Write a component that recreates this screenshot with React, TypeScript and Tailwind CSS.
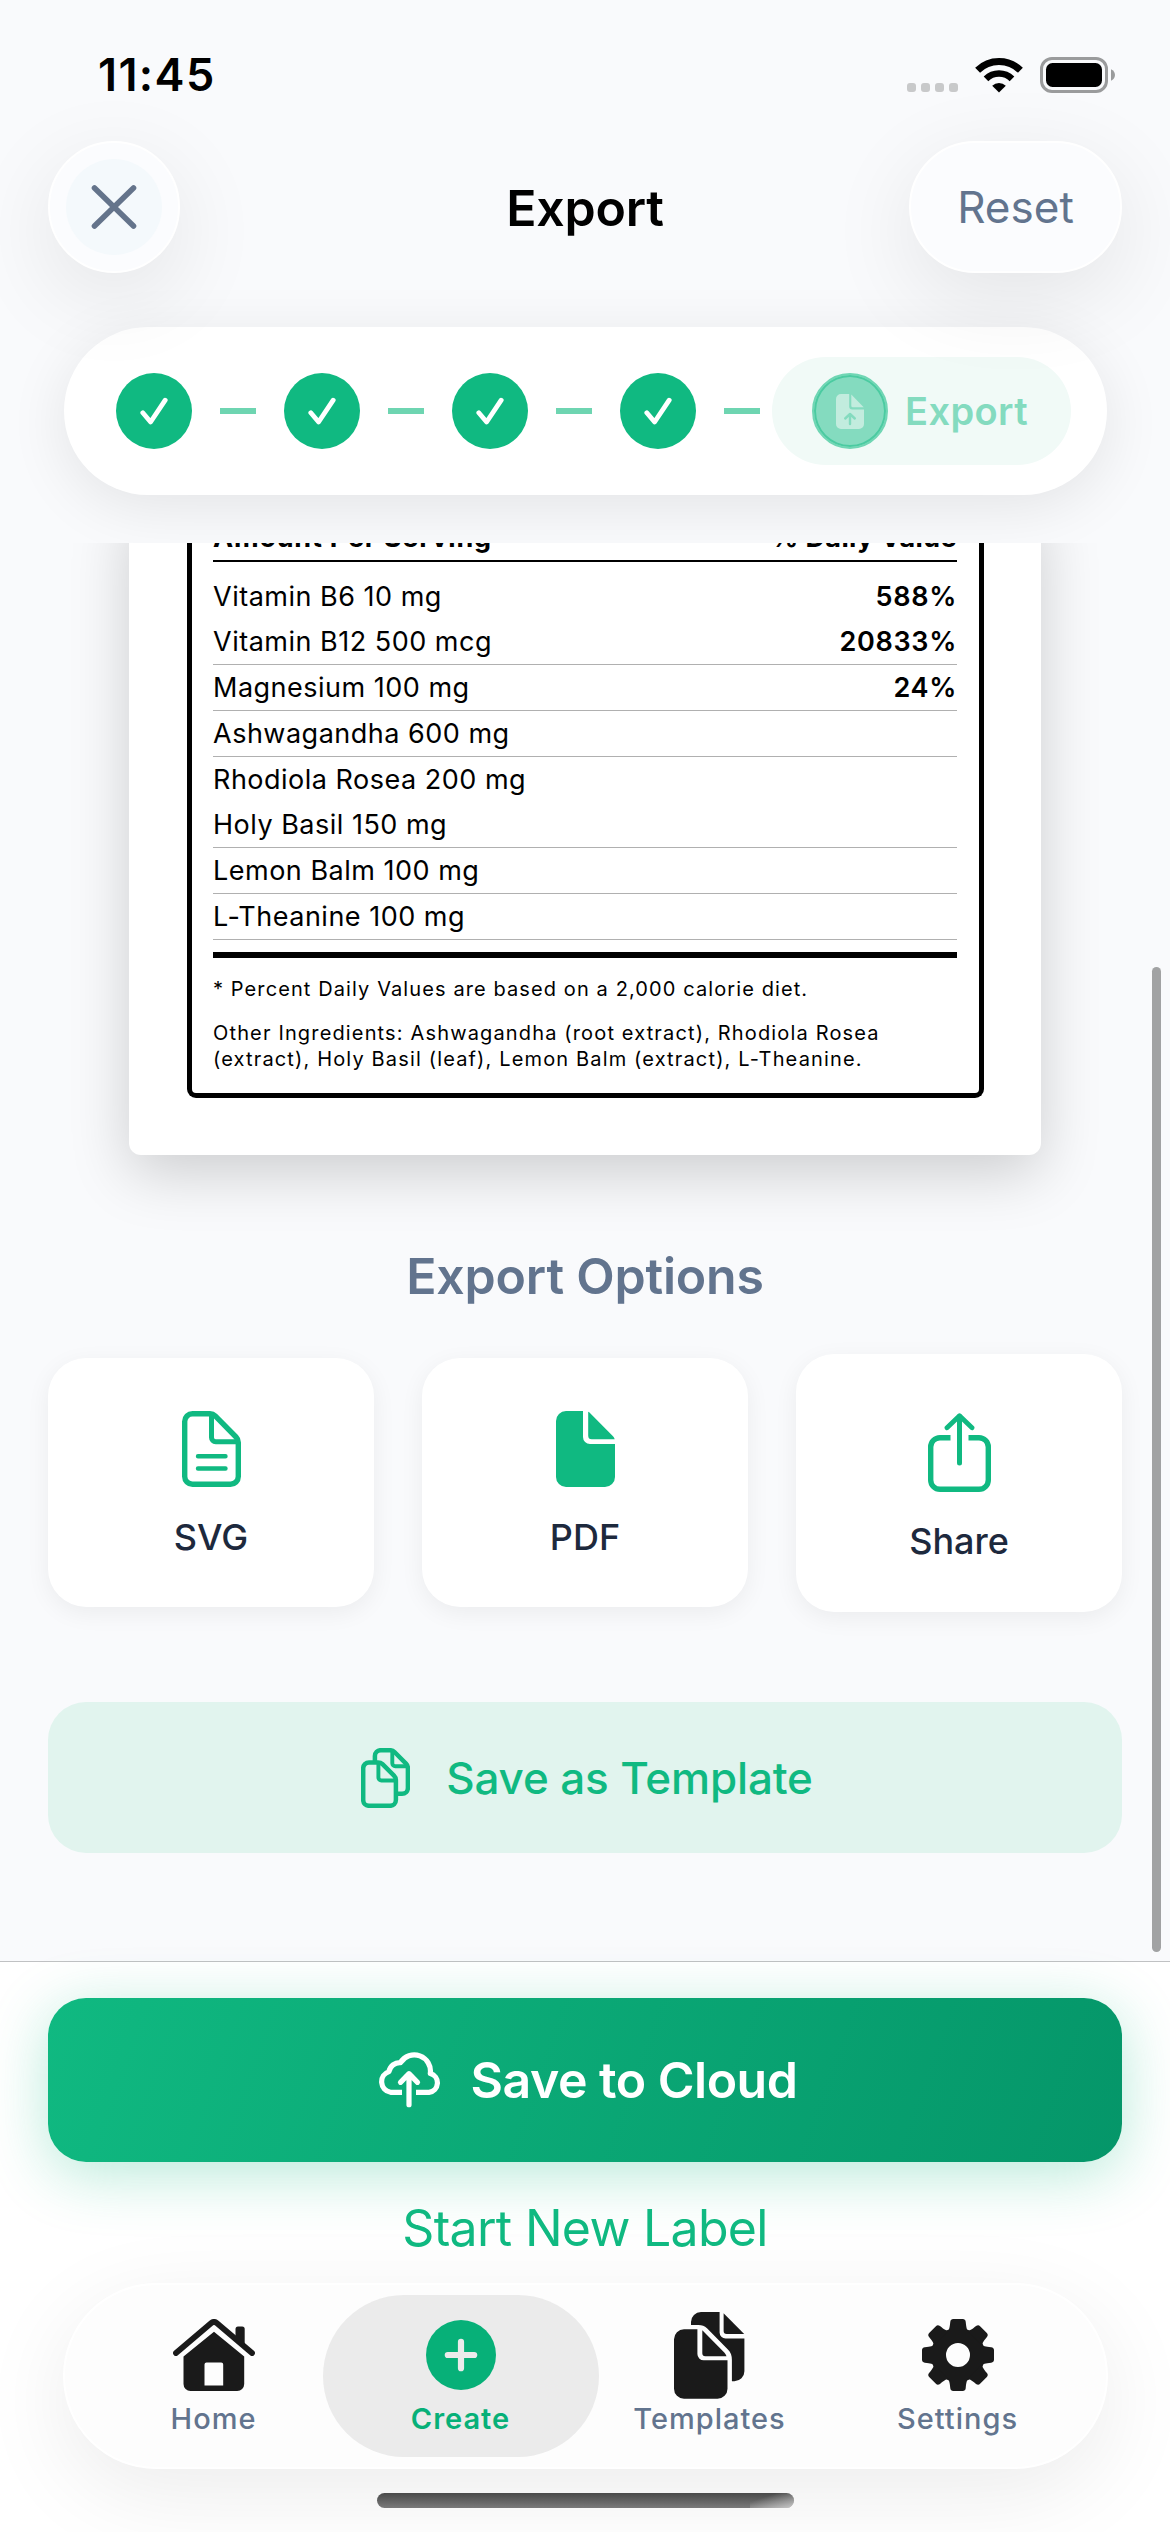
import type { ReactNode } from "react";
import clsx from "clsx";

interface Nutrient {
  name: string;
  value?: string;
  divider: boolean;
}

const nutrients: Nutrient[] = [
  { name: "Vitamin B6 10 mg", value: "588%", divider: false },
  { name: "Vitamin B12 500 mcg", value: "20833%", divider: true },
  { name: "Magnesium 100 mg", value: "24%", divider: true },
  { name: "Ashwagandha 600 mg", divider: true },
  { name: "Rhodiola Rosea 200 mg", divider: false },
  { name: "Holy Basil 150 mg", divider: true },
  { name: "Lemon Balm 100 mg", divider: true },
  { name: "L-Theanine 100 mg", divider: true },
];

function WifiIcon() {
  return (
    <svg width="48" height="36" viewBox="0 0 48 36" fill="none" stroke="#000">
      <path d="M2.6 13.2a30.5 30.5 0 0 1 42.8 0" strokeWidth="7" />
      <path d="M11 21.8a18.6 18.6 0 0 1 26 0" strokeWidth="6.6" />
      <path d="M24 35.6 17.2 28.8a9.8 9.8 0 0 1 13.6 0Z" fill="#000" stroke="none" />
    </svg>
  );
}

function BatteryIcon() {
  return (
    <svg width="75" height="36" viewBox="0 0 75 36">
      <rect x="1.5" y="1.5" width="65" height="33" rx="10.5" fill="none" stroke="#9a9b9c" strokeWidth="3" />
      <rect x="6" y="6" width="56" height="24" rx="6.5" fill="#000" />
      <path d="M71 12.3c2.4 1 4 3.2 4 5.7s-1.6 4.7-4 5.7Z" fill="#9a9b9c" />
    </svg>
  );
}

function CloseIcon() {
  return (
    <svg width="46" height="46" viewBox="0 0 46 46" fill="none" stroke="#64748b" strokeWidth="5.6" strokeLinecap="round">
      <path d="M3.500 4 42.500 42M42.500 4 3.500 42" />
    </svg>
  );
}

function DocumentIcon() {
  return (
    <svg width="59" height="76" viewBox="0 0 59 76" fill="none" stroke="#10b981" strokeWidth="5.4" strokeLinejoin="round">
      <path d="M10.5 2.7H28c2 0 3.8.8 5.2 2.2L54 26c1.5 1.5 2.300 3.300 2.300 5.400V65.500a7.800 7.800 0 0 1-7.800 7.800h-38a7.800 7.800 0 0 1-7.800-7.800v-55a7.800 7.800 0 0 1 7.800-7.800Z" />
      <path d="M29.500 3.500V26.500a4.200 4.200 0 0 0 4.200 4.200H56" strokeWidth="5" />
      <path d="M16 45.200H43.500M16 57.500H43.500" strokeWidth="4.400" strokeLinecap="round" />
    </svg>
  );
}

function DocumentFilledIcon() {
  return (
    <svg width="59" height="76" viewBox="0 0 59 76" fill="#10b981">
      <path d="M10 0H27V26a7 7 0 0 0 7 7H59V66a10 10 0 0 1-10 10H10A10 10 0 0 1 0 66V10A10 10 0 0 1 10 0Z" />
      <path d="M32.200.8C33 1.200 33.500 1.500 34.200 2.200L57 25.200C57.800 26 58.300 27 58.700 28.200H35.700a3.500 3.500 0 0 1-3.500-3.500Z" />
    </svg>
  );
}

function ShareIcon() {
  return (
    <svg width="63" height="79" viewBox="0 0 63 79" fill="none" stroke="#10b981" strokeWidth="5.2" strokeLinecap="round" strokeLinejoin="round">
      <path d="M22.500 24.700H12a9.300 9.300 0 0 0-9.300 9.300V67a9.300 9.300 0 0 0 9.300 9.300H51A9.300 9.300 0 0 0 60.300 67V34a9.300 9.300 0 0 0-9.300-9.300H40.500" strokeLinecap="butt" strokeWidth="5.4" />
      <path d="M31.500 3.500V50" strokeWidth="5" />
      <path d="M19 14.800 31.500 2.800 44 14.800" strokeWidth="4.8" />
    </svg>
  );
}

function CopyIcon() {
  return (
    <svg width="49" height="60" viewBox="0 0 49 60" fill="none" stroke="#10b981" strokeWidth="4.5" strokeLinejoin="round">
      <path d="M8 14.400H17c1.800 0 3.200.5 4.500 1.800L33 27.700c1.300 1.300 1.900 2.800 1.900 4.700V52a5.800 5.800 0 0 1-5.800 5.800H8A5.800 5.800 0 0 1 2.200 52V20.200A5.800 5.800 0 0 1 8 14.400Z" />
      <path d="M17.400 15V29.500a3 3 0 0 0 3 3H35" strokeWidth="3.9" />
      <path d="M13.900 13.500V8A5.800 5.800 0 0 1 19.700 2.200H29c1.800 0 3.200.5 4.500 1.800L45 15.600c1.300 1.300 1.900 2.800 1.900 4.700V40a5.800 5.800 0 0 1-5.800 5.800H36.500" />
      <path d="M31.300 3V15.300a3 3 0 0 0 3 3H46.500" strokeWidth="3.9" />
    </svg>
  );
}

function CloudUploadIcon() {
  return (
    <svg width="65" height="56" viewBox="0 0 65 56" fill="none" stroke="#fff" strokeWidth="5.2" strokeLinejoin="round">
      <path d="M25 40.300H13.500A10.700 10.700 0 0 1 12 19.600 11 11 0 0 1 23.500 10.600 16.200 16.200 0 0 1 53.300 21.500 9.600 9.600 0 0 1 52 40.300H39" />
      <path d="M32 22V52.700M23.500 30.300 32 21.700 40.500 30.300" strokeLinecap="round" />
    </svg>
  );
}

function UploadFileIcon() {
  return (
    <svg width="28" height="35" viewBox="0 0 28 35">
      <path
        d="M5 0H13.200V12.500a3 3 0 0 0 3 3H28V30a5 5 0 0 1-5 5H5a5 5 0 0 1-5-5V5a5 5 0 0 1 5-5ZM15.300.4 27.700 13.300H16.800a1.500 1.500 0 0 1-1.500-1.500Z"
        fill="#c2ecde"
      />
      <path d="M14 30V20.500M9.200 24.500 14 20 18.800 24.500" fill="none" stroke="#84dbbf" strokeWidth="2.4" strokeLinecap="round" strokeLinejoin="round" />
    </svg>
  );
}

function HomeIcon() {
  return (
    <svg width="82" height="72" viewBox="0 0 82 72" fill="#1a1a1a">
      <path d="M3 34 38.300 4Q41 1.800 43.700 4L79 34" fill="none" stroke="#1a1a1a" strokeWidth="5.8" strokeLinecap="round" strokeLinejoin="round" />
      <path d="M62.500 20V10a2.500 2.500 0 0 1 2.500-2.500h4.200a2.500 2.500 0 0 1 2.500 2.500V29Z" />
      <path
        fillRule="evenodd"
        d="M41 12.700 71.200 37.500V65a7 7 0 0 1-7 7H17.500a7 7 0 0 1-7-7V37.500ZM33.500 43.500a2 2 0 0 0-2 2V66.500H50.200v-21a2 2 0 0 0-2-2Z"
      />
    </svg>
  );
}

function PlusCircleIcon() {
  return (
    <svg width="70" height="70" viewBox="0 0 70 70">
      <circle cx="35" cy="35" r="35" fill="#07b078" />
      <path d="M21.800 35H48.200M35 21.800V48.200" stroke="#ebebeb" strokeWidth="6.2" strokeLinecap="round" />
    </svg>
  );
}

function TemplatesIcon() {
  return (
    <svg width="71" height="87" viewBox="0 0 71 87" fill="#1a1a1a">
      <path d="M10 17.300H23.400V42a6.300 6.300 0 0 0 6.300 6.300H53.500V76.700a10 10 0 0 1-10 10H10a10 10 0 0 1-10-10V27.300a10 10 0 0 1 10-10Z" />
      <path d="M28.300 18.300 50.500 40.800c1 1 1.600 2.200 2 3.500H31.300a3 3 0 0 1-3-3Z" />
      <path d="M17 13V10A10 10 0 0 1 27 0H45.600V20.400a6 6 0 0 0 6 6H70.400V59.300a10 10 0 0 1-10 10H57.900V48c0-4.500-1-7.500-4-10.500L33 16.300C30.500 13.800 28 13 24.500 13Z" />
      <path d="M49.600 1.200 70.200 22H52.600a3 3 0 0 1-3-3Z" />
    </svg>
  );
}

function GearIcon() {
  return (
    <svg width="72" height="72" viewBox="-36 -36 72 72" fill="#1a1a1a">
      <circle r="19.5" fill="none" stroke="#1a1a1a" strokeWidth="15" />
      {[0, 45, 90, 135, 180, 225, 270, 315].map((angle) => (
        <path
          key={angle}
          transform={`rotate(${angle})`}
          d="M-10.500-23.500C-8.800-25.500-8.300-27-7.700-33.200-7.500-35-6.400-36-4.800-36H4.800C6.400-36 7.500-35 7.700-33.200 8.300-27 8.800-25.500 10.500-23.500Z"
        />
      ))}
    </svg>
  );
}

function StepDone() {
  return (
    <div className="flex size-[76px] items-center justify-center rounded-full bg-[#10b981]">
      <svg width="28" height="28" viewBox="0 0 28 28" fill="none" stroke="#fff" strokeWidth="4.8" strokeLinecap="round" strokeLinejoin="round">
        <path d="M2.800 15.800 10.600 25 25.200 3.200" />
      </svg>
    </div>
  );
}

function ExportCard({ icon, label, tall }: { icon: ReactNode; label: string; tall?: boolean }) {
  return (
    <button
      className={clsx(
        "flex flex-1 flex-col items-center rounded-[38px] bg-white shadow-[0_6px_24px_rgba(0,0,0,0.06)]",
        tall ? "h-[258px] gap-7 pt-[59px]" : "h-[249px] gap-[29px] pt-[53px]"
      )}
    >
      {icon}
      <span className="text-[36px] leading-[43px] font-medium text-slate-800">{label}</span>
    </button>
  );
}

function TabItem({ icon, label, active }: { icon: ReactNode; label: string; active?: boolean }) {
  return (
    <div
      className={clsx(
        "flex h-[162px] flex-col items-center pt-4",
        active ? "-mr-[13px] -ml-[15px] w-[276px] rounded-full bg-[#ebebeb]" : "w-[248px]"
      )}
    >
      <div className="flex h-[88px] items-center">{icon}</div>
      <span
        className={clsx(
          "mt-0.5 text-[29px] leading-9 tracking-[1px]",
          active ? "font-semibold text-[#07b078]" : "font-medium text-slate-500"
        )}
      >
        {label}
      </span>
    </div>
  );
}

export default function App() {
  return (
    <div className="relative flex h-[2532px] w-[1170px] flex-col overflow-hidden bg-[#f9fafc] font-['Inter',sans-serif]">
      <header className="h-[543px] overflow-hidden">
        <div className="flex h-[141px] items-center justify-between pt-2 pr-[55px] pl-[98px]">
          <span className="text-[45px] leading-none font-semibold tracking-[1.4px] text-black">11:45</span>
          <div className="flex items-center gap-[17px]">
            <div className="mt-[25px] flex gap-[5px]">
              {[0, 1, 2, 3].map((dot) => (
                <span key={dot} className="size-[9px] rounded-[3px] bg-[#c8c9ca]" />
              ))}
            </div>
            <WifiIcon />
            <BatteryIcon />
          </div>
        </div>

        <div className="relative z-10 grid h-[132px] grid-cols-[1fr_auto_1fr] items-center px-12">
          <button className="flex size-[132px] items-center justify-center rounded-full border-2 border-white bg-[#fbfcfe] shadow-[0_24px_90px_rgba(0,0,0,0.09)]">
            <span className="flex size-24 items-center justify-center rounded-full bg-[#f4f9fc]">
              <CloseIcon />
            </span>
          </button>
          <h1 className="pt-px text-[50px] leading-none font-semibold tracking-[-0.2px] text-black">Export</h1>
          <button className="h-[132px] w-[213px] justify-self-end rounded-full border-2 border-white bg-[#fbfcfe] text-[44px] text-slate-500 shadow-[0_24px_90px_rgba(0,0,0,0.09)]">
            Reset
          </button>
        </div>

        <div className="mt-[54px] ml-16 flex h-[168px] w-[1043px] items-center rounded-full bg-white pl-[52px] shadow-[0_12px_60px_rgba(0,0,0,0.09)]">
          {[0, 1, 2, 3].map((step) => (
            <div key={step} className="flex items-center">
              <StepDone />
              <span className={clsx("ml-7 h-1.5 w-9 bg-[#6ed5b1]", step === 3 ? "mr-3" : "mr-7")} />
            </div>
          ))}
          <div className="flex h-[108px] w-[299px] items-center rounded-full bg-[#f1faf7] pl-10">
            <div className="flex size-[76px] items-center justify-center rounded-full border-2 border-[#70d6b4] bg-[#84dbbf] shadow-[inset_0_0_0_2px_#4bcba1]">
              <UploadFileIcon />
            </div>
            <span className="ml-[17px] text-[38px] font-semibold tracking-[0.4px] text-[#84dbbf]">Export</span>
          </div>
        </div>
      </header>

      <main className="h-[1418px] overflow-hidden px-12">
        <div className="mx-[81px] -mt-[43px] rounded-xl bg-white px-[58px] pb-[57px] shadow-[0_18px_60px_rgba(0,0,0,0.18)]">
          <div className="mr-[-1px] rounded-b-[9px] border-[5px] border-t-0 border-black pr-[22px] pb-[21px] pl-[21px] text-[27px] text-black">
            <div className="flex h-[62px] items-end justify-between border-b-2 border-black pb-[9px] leading-none font-bold">
              <span className="tracking-[0.8px]">Amount Per Serving</span>
              <span className="tracking-[0.4px]">% Daily Value</span>
            </div>
            <div className="pt-3">
              {nutrients.map((item) => (
                <div
                  key={item.name}
                  className={clsx(
                    "flex items-center justify-between leading-[45px]",
                    item.divider && "border-b border-[#b0b0b0]"
                  )}
                >
                  <span className="tracking-[0.5px]">{item.name}</span>
                  {item.value && <span className="font-semibold tracking-[0.7px]">{item.value}</span>}
                </div>
              ))}
            </div>
            <div className="mt-3 h-1.5 bg-black" />
            <p className="mt-[18px] text-[20px] leading-[26.5px] tracking-[1.1px]">
              * Percent Daily Values are based on a 2,000 calorie diet.
            </p>
            <p className="mt-[17px] -mb-px text-[20px] leading-[26.5px] tracking-[1.15px]">
              Other Ingredients: Ashwagandha (root extract), Rhodiola Rosea
              <br />
              (extract), Holy Basil (leaf), Lemon Balm (extract), L-Theanine.
            </p>
          </div>
        </div>

        <h2 className="mt-[91px] text-center text-[50px] leading-[60px] font-semibold tracking-[-0.2px] text-slate-500">
          Export Options
        </h2>

        <div className="mt-12 flex items-center gap-12">
          <ExportCard icon={<DocumentIcon />} label="SVG" />
          <ExportCard icon={<DocumentFilledIcon />} label="PDF" />
          <ExportCard icon={<ShareIcon />} label="Share" tall />
        </div>

        <button className="mt-[90px] flex h-[151px] w-full items-center justify-center gap-9 rounded-[38px] bg-[#e1f4ee] pt-0.5 pl-1 text-[44px] font-medium tracking-[-0.15px] text-[#10b981]">
          <CopyIcon />
          Save as Template
        </button>
      </main>

      <footer className="h-[571px] border-t border-[#c0c1c3] bg-white px-12 pt-9">
        <button className="flex h-[164px] w-full items-center justify-center gap-[29px] rounded-[38px] bg-linear-110 from-[#10b981] to-[#059669] pl-1 text-[50px] font-semibold tracking-[-0.5px] text-white shadow-[0_12px_60px_rgba(16,185,129,0.3)]">
          <CloudUploadIcon />
          Save to Cloud
        </button>
        <button className="mt-9 block w-full text-center text-[50px] leading-[60px] tracking-[-0.7px] text-[#10b981]">
          Start New Label
        </button>

        <nav className="mt-[25px] ml-[15px] flex h-[186px] w-[1045px] items-center justify-center rounded-full border-2 border-white bg-[#fdfdfd] shadow-[0_24px_90px_rgba(0,0,0,0.08)]">
          <TabItem icon={<HomeIcon />} label="Home" />
          <TabItem icon={<PlusCircleIcon />} label="Create" active />
          <TabItem icon={<TemplatesIcon />} label="Templates" />
          <TabItem icon={<GearIcon />} label="Settings" />
        </nav>
        <div className="mx-auto mt-6 flex h-[15px] w-[417px] justify-end overflow-hidden rounded-full bg-linear-to-b from-[#4a4a4a] to-[#7a7a7a]">
          <div className="w-11 bg-linear-to-br from-transparent from-30% to-white/60" />
        </div>
      </footer>

      {/* scroll indicator */}
      <div className="absolute top-[967px] left-[1152px] h-[985px] w-[9px] rounded-full bg-[#a1a2a3]" />
    </div>
  );
}
